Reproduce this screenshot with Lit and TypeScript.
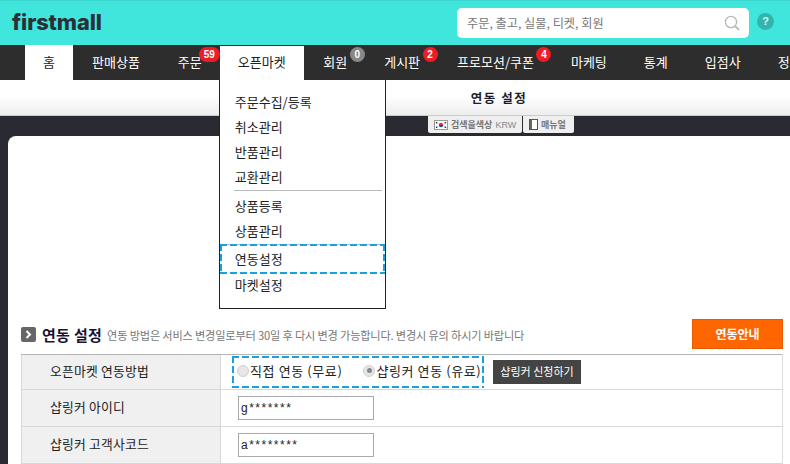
import { LitElement, html, css, svg } from "lit";
import { customElement } from "lit/decorators.js";

const navItems: { label: string; badge?: string; grey?: boolean; cls?: string }[] = [
  { label: "홈", cls: "home" },
  { label: "판매상품", cls: "early" },
  { label: "주문", badge: "59", cls: "early wide-badge" },
  { label: "오픈마켓", cls: "open" },
  { label: "회원", badge: "0", grey: true },
  { label: "게시판", badge: "2" },
  { label: "프로모션/쿠폰", badge: "4" },
  { label: "마케팅" },
  { label: "통계" },
  { label: "입점사" },
  { label: "정" },
];

const flag = svg`<svg class="flag" width="14" height="10" viewBox="0 0 14 10"><rect x=".5" y=".5" width="13" height="9" fill="#fff" stroke="#999"/><path d="M4.8 5a2.2 2.2 0 0 1 4.4 0z" fill="#d33"/><path d="M4.8 5a2.2 2.2 0 0 0 4.4 0z" fill="#24a"/><path d="M2 2.2l1.4 1.2M2 7.8l1.4-1.2M12 2.2l-1.4 1.2M12 7.8l-1.4-1.2" stroke="#222" stroke-width="1.2"/></svg>`;

@customElement("app-root")
export class AppRoot extends LitElement {
  static styles = css`
    :host {
      display: block;
      width: 790px;
      height: 464px;
      overflow: hidden;
      background: #2a2a33;
      font-family: "Noto Sans CJK KR", "Noto Sans", sans-serif;
      color: #222;
    }
    .top {
      height: 45px;
      box-sizing: border-box;
      background: #40e6dc;
      border-top: 1px solid #3ad6cd;
      display: flex;
      align-items: center;
      padding: 0 0 0 12px;
    }
    .logo {
      font-family: "Inter", "Noto Sans", sans-serif;
      font-weight: 800;
      font-size: 21.8px;
      letter-spacing: -0.1px;
      color: #2b3038;
      width: 445px;
      margin-top: -2px;
    }
    .search {
      width: 292px;
      height: 30px;
      margin-top: -1px;
      background: #fff;
      border-radius: 5px;
      display: flex;
      align-items: center;
      justify-content: space-between;
      padding: 0 9px 0 10px;
      box-sizing: border-box;
      font-size: 12.2px;
      color: #777;
    }
    .help {
      width: 17px;
      height: 17px;
      margin: -3px 0 0 8px;
      border-radius: 50%;
      background: #32b5ae;
      color: #d8f7f4;
      font: bold 11px/17px "Liberation Sans", sans-serif;
      text-align: center;
    }
    .nav {
      height: 35px;
      background: #2d2d2d;
      display: flex;
      padding-left: 25px;
      white-space: nowrap;
      font-size: 13px;
      color: #fff;
      position: relative;
      z-index: 2;
    }
    .nav-item {
      position: relative;
      padding: 0 18.5px;
      line-height: 34px;
      flex: none;
    }
    .nav-item.early {
      padding: 0 19px;
    }
    .nav-item.home {
      background: #fff;
      color: #222;
      width: 48px;
      box-sizing: border-box;
      text-align: center;
      padding: 0;
    }
    .nav-item.open {
      background: #fff;
      color: #222;
      width: 84px;
      box-sizing: border-box;
      margin: 1px 1px 0 -1px;
      padding: 0 18px;
      line-height: 32px;
    }
    .badge {
      position: absolute;
      top: 2px;
      right: 1px;
      min-width: 15px;
      height: 15px;
      border-radius: 8px;
      background: #ee1c25;
      color: #fff;
      font: bold 10px/15px "Liberation Sans", sans-serif;
      text-align: center;
      box-sizing: border-box;
      padding: 0 1px;
    }
    .wide-badge .badge {
      min-width: 21px;
    }
    .badge.grey {
      background: #888;
    }
    .menu {
      position: absolute;
      left: -1px;
      top: 34px;
      width: 167px;
      height: 229px;
      box-sizing: border-box;
      background: #fff;
      border: 1px solid #222;
      border-top: 0;
      color: #222;
      font-size: 13px;
      padding: 9px 0 0 15px;
      line-height: 25px;
    }
    .menu div {
      height: 25px;
    }
    .menu .sep {
      height: 1px;
      background: #bbb;
      margin: 1px 3px 2px -1px;
    }
    .menu .focus {
      height: 30px;
      line-height: 26px;
      margin: 1px 0 0 -15px;
      box-sizing: border-box;
      width: 165px;
      padding: 2px 0 0 15px;
      background:
        repeating-linear-gradient(90deg, #1a9fe0 0 7px, transparent 7px 10px) top / 100% 2px no-repeat,
        repeating-linear-gradient(90deg, #1a9fe0 0 7px, transparent 7px 10px) bottom / 100% 2px no-repeat,
        repeating-linear-gradient(180deg, #1a9fe0 0 7px, transparent 7px 10px) left / 2px 100% no-repeat,
        repeating-linear-gradient(180deg, #1a9fe0 0 7px, transparent 7px 10px) right / 2px 100% no-repeat,
        linear-gradient(#bbb, #bbb) top / 100% 1px no-repeat;
    }
    .menu .after-focus {
      line-height: 21px;
    }
    .title {
      height: 36px;
      box-sizing: border-box;
      background: linear-gradient(#fff 45%, #ededed);
      border-bottom: 1px solid #ccc;
      padding: 8px 0 0 208px;
      text-align: center;
      font-size: 12.5px;
      font-weight: 700;
      letter-spacing: 1.5px;
      color: #1c1c2c;
    }
    .band {
      height: 20px;
      display: flex;
      padding-left: 428px;
      align-items: flex-start;
      gap: 1px;
    }
    .tab {
      height: 17px;
      box-sizing: border-box;
      background: #efefef;
      border-radius: 0 0 2px 2px;
      display: flex;
      align-items: center;
      gap: 3px;
      padding-left: 6px;
      font-size: 9px;
      font-weight: 700;
      color: #777;
      white-space: nowrap;
    }
    .tab .krw {
      font-weight: 400;
      color: #888;
      font-family: "Liberation Sans", sans-serif;
    }
    .tab.currency { width: 94px; }
    .tab.manual { width: 51px; }
    .card {
      background: #fff;
      margin-left: 8px;
      border-top-left-radius: 8px;
      height: 328px;
      box-sizing: border-box;
      padding: 183px 7px 0 13px;
    }
    .head {
      display: flex;
      align-items: center;
      height: 30px;
      margin-bottom: 5px;
    }
    .head .arrow {
      width: 15px;
      height: 15px;
      margin-top: 1px;
      background: #666;
      border-radius: 2px;
      flex: none;
      display: flex;
      align-items: center;
      justify-content: center;
    }
    .head h2 {
      margin: 0 0 0 6px;
      font-size: 15px;
      font-weight: 700;
      letter-spacing: .3px;
      color: #1c1230;
      white-space: nowrap;
    }
    .head p {
      margin: 2px 0 0 5px;
      font-size: 11.2px;
      letter-spacing: -0.18px;
      color: #777;
      white-space: nowrap;
      flex: 1;
    }
    .guide {
      width: 91px;
      height: 30px;
      background: #ff6600;
      border: 1px solid #e85c00;
      box-sizing: border-box;
      color: #fff;
      font-size: 12px;
      font-weight: 700;
      text-align: center;
      line-height: 28px;
      flex: none;
    }
    .row {
      display: grid;
      grid-template-columns: 200px 1fr;
      border-bottom: 1px solid #d8d8d8;
      height: 37px;
      box-sizing: border-box;
      border-right: 1px solid #e0e0e0;
      font-size: 12.8px;
    }
    .row.first {
      border-top: 1px solid #b5b5b5;
      height: 36px;
    }
    .label {
      background: #f0f0f0;
      border-left: 1px solid #d8d8d8;
      border-right: 1px solid #d8d8d8;
      padding: 0 0 3px 28px;
      display: flex;
      align-items: center;
      color: #222;
      letter-spacing: .2px;
    }
    .value {
      display: flex;
      align-items: center;
      padding-left: 17px;
    }
    .first .value {
      padding-left: 11px;
    }
    .choice {
      width: 252px;
      height: 32px;
      box-sizing: border-box;
      display: flex;
      align-items: center;
      padding: 2px 2px 5px 5px;
      white-space: nowrap;
      font-size: 13px;
      letter-spacing: .6px;
      flex: none;
      background:
        repeating-linear-gradient(90deg, #1a9fe0 0 7px, transparent 7px 10px) top / 100% 2px no-repeat,
        repeating-linear-gradient(90deg, #1a9fe0 0 7px, transparent 7px 10px) bottom / 100% 2px no-repeat,
        repeating-linear-gradient(180deg, #1a9fe0 0 7px, transparent 7px 10px) left / 2px 100% no-repeat,
        repeating-linear-gradient(180deg, #1a9fe0 0 7px, transparent 7px 10px) right / 2px 100% no-repeat;
    }
    .radio {
      width: 12px;
      height: 12px;
      box-sizing: border-box;
      margin-right: 1px;
      border-radius: 50%;
      background: #e6e6e6;
      border: 1px solid #d0d0d0;
      flex: none;
      display: flex;
      align-items: center;
      justify-content: center;
    }
    .radio.on::after {
      content: "";
      width: 5px;
      height: 5px;
      border-radius: 50%;
      background: #888;
    }
    .opt2 {
      margin-left: 21px;
      display: flex;
      align-items: center;
    }
    .apply {
      margin-left: 9px;
      width: 88px;
      height: 24px;
      background: #444;
      color: #fff;
      font-size: 11px;
      line-height: 23px;
      text-align: center;
      flex: none;
      white-space: nowrap;
    }
    .field {
      width: 136px;
      height: 24px;
      box-sizing: border-box;
      border: 1px solid #aaa;
      padding: 0 0 0 2px;
      font: 12px/22px "Liberation Sans", sans-serif;
      letter-spacing: 1.5px;
      color: #222;
    }
  `;

  render() {
    return html`
      <div class="top">
        <div class="logo">firstmall</div>
        <div class="search">
          <span>주문, 출고, 실물, 티켓, 회원</span>
          <svg width="16" height="16" viewBox="0 0 16 16" fill="none" stroke="#b9b9b9" stroke-width="1.4"><circle cx="7" cy="7" r="5.6"/><path d="M11.2 11.2L15 15" stroke-width="1.8"/></svg>
        </div>
        <div class="help">?</div>
      </div>
      <div class="nav">
        ${navItems.map(
          (n) => html`<div class="nav-item ${n.cls ?? ""}">
            ${n.label}
            ${n.badge ? html`<span class="badge ${n.grey ? "grey" : ""}">${n.badge}</span>` : ""}
            ${n.cls === "open"
              ? html`<div class="menu">
                  <div>주문수집/등록</div>
                  <div>취소관리</div>
                  <div>반품관리</div>
                  <div>교환관리</div>
                  <div class="sep"></div>
                  <div>상품등록</div>
                  <div>상품관리</div>
                  <div class="focus">연동설정</div>
                  <div class="after-focus">마켓설정</div>
                </div>`
              : ""}
          </div>`
        )}
      </div>
      <div class="title">연동 설정</div>
      <div class="band">
        <div class="tab currency">${flag}<span>검색을색상</span><span class="krw">KRW</span></div>
        <div class="tab manual">
          <svg width="9" height="11" viewBox="0 0 9 11"><rect x=".5" y=".5" width="8" height="10" fill="#fff" stroke="#555"/><rect x="1" y="1" width="2" height="9" fill="#666"/></svg>
          <span>매뉴얼</span>
        </div>
      </div>
      <div class="card">
        <div class="head">
          <span class="arrow"><svg width="7" height="9" viewBox="0 0 7 9" fill="none" stroke="#fff" stroke-width="2"><path d="M1.5 1l3.5 3.5L1.5 8"/></svg></span>
          <h2>연동 설정</h2>
          <p>연동 방법은 서비스 변경일로부터 30일 후 다시 변경 가능합니다. 변경시 유의 하시기 바랍니다</p>
          <div class="guide">연동안내</div>
        </div>
        <div class="row first">
          <div class="label">오픈마켓 연동방법</div>
          <div class="value">
            <div class="choice">
              <span class="radio"></span><span>직접 연동 (무료)</span>
              <span class="opt2"><span class="radio on"></span><span>샵링커 연동 (유료)</span></span>
            </div>
            <div class="apply">샵링커 신청하기</div>
          </div>
        </div>
        <div class="row">
          <div class="label">샵링커 아이디</div>
          <div class="value"><div class="field">g*******</div></div>
        </div>
        <div class="row">
          <div class="label">샵링커 고객사코드</div>
          <div class="value"><div class="field">a********</div></div>
        </div>
      </div>
    `;
  }
}
